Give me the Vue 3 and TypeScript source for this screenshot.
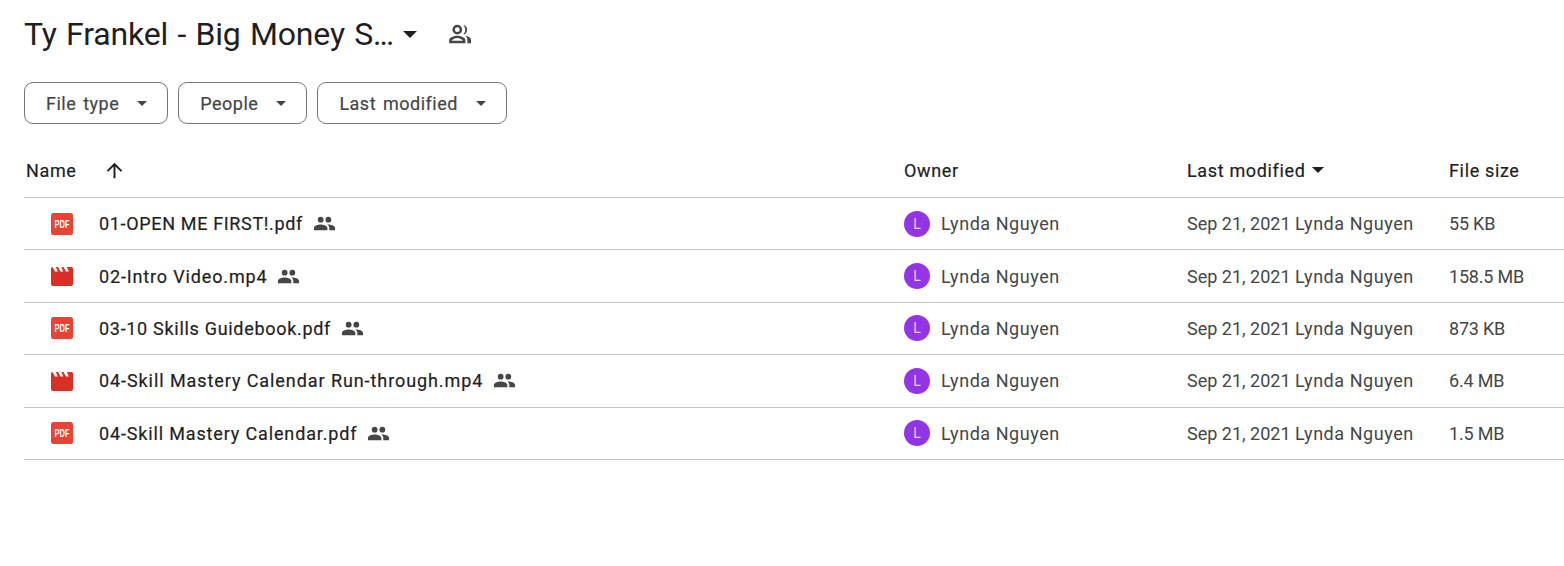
<script setup lang="ts">
interface FileRow { name: string; kind: 'pdf' | 'video'; size: string; track: number }
const filters: string[] = ['File type', 'People', 'Last modified']
const files: FileRow[] = [
  { name: '01-OPEN ME FIRST!.pdf', kind: 'pdf', size: '55 KB', track: 0.66 },
  { name: '02-Intro Video.mp4', kind: 'video', size: '158.5 MB', track: 0.85 },
  { name: '03-10 Skills Guidebook.pdf', kind: 'pdf', size: '873 KB', track: 0.7 },
  { name: '04-Skill Mastery Calendar Run-through.mp4', kind: 'video', size: '6.4 MB', track: 0.92 },
  { name: '04-Skill Mastery Calendar.pdf', kind: 'pdf', size: '1.5 MB', track: 0.85 },
]
</script>

<template>
  <main class="page">
    <header class="title-row">
      <h1 class="title">Ty Frankel - Big Money S<span class="dots">...</span></h1>
      <span class="caret title-caret"></span>
      <svg class="shared-outline" viewBox="0 0 24 24" width="26" height="26" fill="#444746">
        <path d="M9.500 12.500a4.500 4.500 0 1 0 0-9 4.500 4.500 0 0 0 0 9Zm0-6.700a2.200 2.200 0 1 1 0 4.400 2.200 2.200 0 0 1 0-4.400ZM9.500 13.500c-3 0-7.500 1.400-7.500 4.200V20.500h15v-2.800c0-2.800-4.500-4.200-7.500-4.200Zm-5.200 4.700c.4-1 3-2.400 5.200-2.400s4.800 1.400 5.200 2.400H4.300ZM15 3.600a4.500 4.500 0 0 1 0 8.800 6 6 0 0 0 0-8.800ZM17.200 13.700c2.600.4 5 1.700 5 4V20.500h-3.400v-2.800c0-1.500-.6-2.900-1.600-4Z"/>
      </svg>
    </header>

    <div class="filters">
      <button v-for="f in filters" :key="f" class="chip" type="button">
        <span>{{ f }}</span>
        <span class="caret chip-caret"></span>
      </button>
    </div>

    <section class="table">
      <div class="row head">
        <div class="name-head">
          <span>Name</span>
          <svg class="arrow" viewBox="0 0 24 24" width="23" height="23" fill="#1f1f1f">
            <path d="M11 20V7.800l-5.600 5.600L4 12l8-8 8 8-1.400 1.400L13 7.800V20h-2Z"/>
          </svg>
        </div>
        <div>Owner</div>
        <div class="mod-head"><span>Last modified</span><span class="caret head-caret"></span></div>
        <div>File size</div>
      </div>

      <div v-for="file in files" :key="file.name" class="row item">
        <div class="name-cell">
          <svg v-if="file.kind === 'pdf'" class="type-icon" viewBox="0 0 22 22" width="22" height="22">
            <rect width="22" height="22" rx="2.500" fill="#ea4335"/>
            <text x="11" y="14.600" text-anchor="middle" textLength="15" lengthAdjust="spacingAndGlyphs" class="pdf-label">PDF</text>
          </svg>
          <svg v-else class="type-icon" viewBox="0 0 22 22" width="22" height="22">
            <path d="M1.500 2h19A1.500 1.500 0 0 1 22 3.500V19a2 2 0 0 1-2 2H2a2 2 0 0 1-2-2V3.500A1.500 1.500 0 0 1 1.500 2Z" fill="#d93025"/>
            <path d="M1.500 2h3.300l2 4.500H4ZM7 2h3.300l2 4.500H9.500ZM12.500 2h3.300l2 4.500H15Z" fill="#fff"/>
          </svg>
          <span class="file-name" :style="{ letterSpacing: file.track + 'px' }">{{ file.name }}</span>
          <svg class="people" viewBox="0 0 24 24" width="23" height="23" fill="#444746">
            <path d="M16 11a3 3 0 1 0 0-6 3 3 0 0 0 0 6Zm-8 0a3 3 0 1 0 0-6 3 3 0 0 0 0 6Zm0 2c-2.300 0-7 1.200-7 3.500V19h14v-2.500C15 14.200 10.300 13 8 13Zm8 0c-.3 0-.6 0-1 .1 1.200.8 2 2 2 3.400V19h6v-2.500c0-2.300-4.700-3.500-7-3.500Z"/>
          </svg>
        </div>
        <div class="owner-cell">
          <span class="avatar">L</span>
          <span class="person">Lynda Nguyen</span>
        </div>
        <div class="date-cell">Sep 21, 2021 <span class="person">Lynda Nguyen</span></div>
        <div class="size-cell">{{ file.size }}</div>
      </div>
    </section>
  </main>
</template>

<style>
html, body { background: #fff; }
</style>

<style scoped>
.page {
  height: 566px;
  box-sizing: border-box;
  padding: 10px 0 0 24px;
  overflow: hidden;
  font-family: Roboto, "Liberation Sans", sans-serif;
  background: #fff;
}
.title-row {
  display: flex;
  align-items: center;
  height: 48px;
}
.title {
  margin: 0;
  font-size: 32px;
  font-weight: 400;
  letter-spacing: -0.16px;
  word-spacing: 1.500px;
  color: #1f1f1f;
  white-space: nowrap;
}
.dots { letter-spacing: -2px; }
.caret {
  display: inline-block;
  width: 0;
  height: 0;
  border-style: solid;
  border-color: #444746 transparent transparent;
}
.title-caret {
  border-width: 7px 7px 0;
  margin-left: 11px;
  border-top-color: #1f1f1f;
}
.shared-outline { margin-left: 30px; }
.filters {
  display: flex;
  gap: 10px;
  margin-top: 24px;
}
.chip {
  display: flex;
  align-items: center;
  height: 42px;
  box-sizing: border-box;
  padding: 0 20px 0 21px;
  border: 1px solid #747775;
  border-radius: 9px;
  background: #fff;
  color: #444746;
  font: 400 18px Roboto, "Liberation Sans", sans-serif;
  letter-spacing: 0.5px;
  word-spacing: 2px;
  -webkit-text-stroke: 0.2px #444746;
}
.chip-caret {
  border-width: 5px 5px 0;
  margin-left: 18px;
}
.table { margin-top: 21px; }
.row {
  display: grid;
  grid-template-columns: 880px 283px 262px 1fr;
  align-items: center;
  border-bottom: 1px solid #c7c7c7;
  box-sizing: border-box;
}
.head {
  height: 53px;
  padding-bottom: 2px;
  color: #1f1f1f;
  font-size: 18px;
  font-weight: 400;
  letter-spacing: 0.65px;
  -webkit-text-stroke: 0.2px #1f1f1f;
}
.item {
  height: 52.4px;
  color: #444746;
  font-size: 18px;
}
.name-head {
  display: flex;
  align-items: center;
  padding-left: 2px;
}
.arrow { margin-left: 26px; }
.mod-head { display: flex; align-items: center; }
.head-caret {
  border-width: 6px 6px 0;
  border-top-color: #1f1f1f;
  margin-left: 6px;
}
.name-cell {
  display: flex;
  align-items: center;
  padding-left: 27px;
}
.type-icon { flex: none; }
.pdf-label {
  font: 700 10px "Liberation Sans", sans-serif;
  fill: #fff;
}
.file-name {
  margin-left: 26px;
  color: #1f1f1f;
  font-weight: 400;
  -webkit-text-stroke: 0.2px #1f1f1f;
}
.people { margin-left: 10px; }
.owner-cell {
  display: flex;
  align-items: center;
  gap: 11px;
}
.person { letter-spacing: 0.55px; }
.size-cell { letter-spacing: -0.2px; }
.avatar {
  display: flex;
  align-items: center;
  justify-content: center;
  width: 26px;
  height: 26px;
  border-radius: 50%;
  background: #9334e6;
  color: #e8d5fa;
  font-size: 14px;
}
</style>
